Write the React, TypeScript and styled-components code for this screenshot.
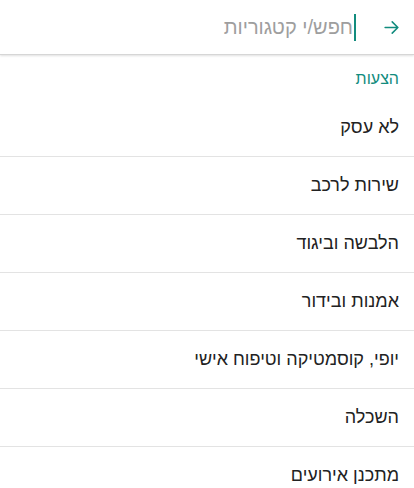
import React from "react";
import styled, { createGlobalStyle } from "styled-components";

const GlobalStyle = createGlobalStyle`
  body {
    margin: 0;
    background: #ffffff;
    font-family: "Liberation Sans", "DejaVu Sans", sans-serif;
  }
`;

const Page = styled.div`
  width: 414px;
  height: 488px;
  overflow: hidden;
  direction: rtl;
  background: #fff;
`;

const SearchBar = styled.div`
  height: 54px;
  display: flex;
  align-items: center;
  padding: 0 14px;
  gap: 27px;
  border-bottom: 1px solid #d6d6d6;
  box-shadow: 0 1px 2px rgba(0, 0, 0, 0.12);
`;

const BackIcon = styled.svg`
  width: 17px;
  height: 17px;
  flex-shrink: 0;
`;

const Field = styled.div`
  display: flex;
  align-items: center;
  flex: 1;
`;

const Caret = styled.span`
  width: 2px;
  height: 27px;
  background: #128c7e;
`;

const Placeholder = styled.span`
  font-size: 20px;
  color: #9e9e9e;
  margin-right: 1px;
`;

const SectionTitle = styled.div`
  height: 40px;
  display: flex;
  align-items: center;
  padding: 4px 15px 0;
  font-size: 16px;
  color: #128c7e;
`;

const List = styled.ul`
  list-style: none;
  margin: 0;
  padding: 0;
`;

const Row = styled.li`
  height: 57px;
  display: flex;
  align-items: center;
  padding: 0 15px;
  font-size: 18px;
  color: #222;
  border-bottom: 1px solid #e3e3e3;
`;

const categories = [
  "לא עסק",
  "שירות לרכב",
  "הלבשה וביגוד",
  "אמנות ובידור",
  "יופי, קוסמטיקה וטיפוח אישי",
  "השכלה",
  "מתכנן אירועים",
];

export default function App() {
  return (
    <Page>
      <GlobalStyle />
      <SearchBar>
        <BackIcon viewBox="0 0 24 24" fill="none" stroke="#128c7e" strokeWidth={2.2} strokeLinecap="round" strokeLinejoin="round">
          <path d="M3 12h18M13 4l8 8-8 8" />
        </BackIcon>
        <Field>
          <Caret />
          <Placeholder>חפש/י קטגוריות</Placeholder>
        </Field>
      </SearchBar>
      <SectionTitle>הצעות</SectionTitle>
      <List>
        {categories.map((c) => (
          <Row key={c}>{c}</Row>
        ))}
      </List>
    </Page>
  );
}
